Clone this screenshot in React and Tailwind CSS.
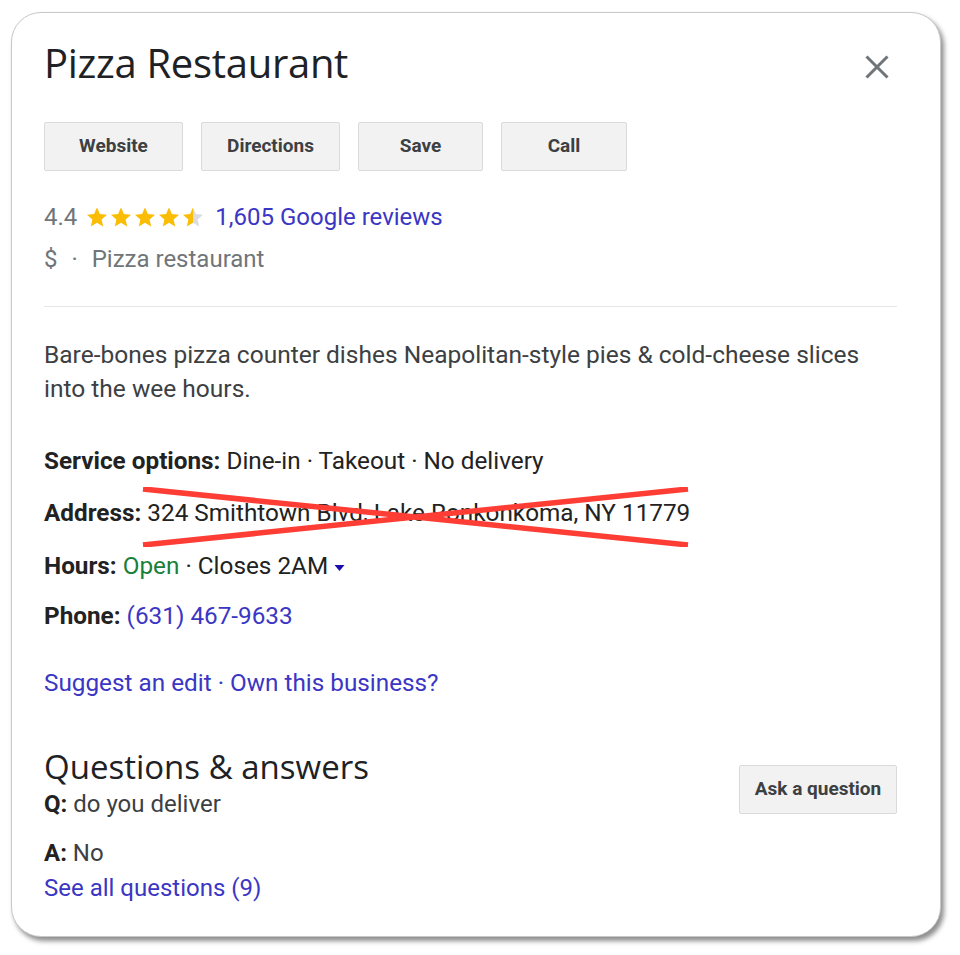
import React from "react";

const body = { fontFamily: "Roboto, 'Liberation Sans', sans-serif" };
const display = { fontFamily: "'Open Sans', Roboto, sans-serif" };

function Star({ fill = "full", id }) {
  const d = "M12 2.5l2.9 6.6 7.1.6-5.4 4.7 1.6 7-6.2-3.7-6.2 3.7 1.6-7L2 9.7l7.1-.6z";
  return (
    <svg viewBox="0 0 24 24" className="h-[24px] w-[24px]">
      {fill === "half" && (
        <defs>
          <linearGradient id={id}>
            <stop offset="50%" stopColor="#fbbc04" />
            <stop offset="50%" stopColor="#dadce0" />
          </linearGradient>
        </defs>
      )}
      <path d={d} fill={fill === "half" ? `url(#${id})` : "#fbbc04"} />
    </svg>
  );
}

function ActionButton({ label, width }) {
  return (
    <button
      className="h-[49px] rounded-[2px] border border-[#dadada] bg-[#f2f2f2] text-[19px] font-bold text-[#3c4043]"
      style={{ width }}
    >
      {label}
    </button>
  );
}

function InfoRow({ label, children, className = "" }) {
  return (
    <div className={`text-[24.3px] leading-[32px] text-[#222] ${className}`}>
      <span className="font-bold">{label}</span> {children}
    </div>
  );
}

export default function App() {
  return (
    <div className="min-h-[955px] w-[960px] bg-white pl-[11px] pt-[12px]" style={body}>
      <div className="relative h-[925px] w-[930px] rounded-[30px] border border-[#c8c8c8] bg-white pl-[32px] pr-[43px] pt-[25px] shadow-[3px_4px_5px_rgba(0,0,0,0.45)]">
        <div className="flex items-start justify-between">
          <h1 className="text-[40px] leading-[50px] tracking-[-0.3px] text-[#202124]" style={display}>
            Pizza Restaurant
          </h1>
          <svg viewBox="0 0 24 24" className="mr-[6px] mt-[15px] h-[28px] w-[28px]">
            <path d="M3 3L21 21M21 3L3 21" stroke="#70757a" strokeWidth="2.6" />
          </svg>
        </div>

        <div className="mt-[34px] flex gap-[18px]">
          <ActionButton label="Website" width={139} />
          <ActionButton label="Directions" width={139} />
          <ActionButton label="Save" width={125} />
          <ActionButton label="Call" width={126} />
        </div>

        <div className="mt-[30px] flex items-center text-[24px] leading-[32px]">
          <span className="text-[#70757a]">4.4</span>
          <span className="ml-[8px] flex items-center gap-0">
            <Star />
            <Star />
            <Star />
            <Star />
            <Star fill="half" id="halfstar" />
          </span>
          <span className="ml-[10px] text-[#3b36c4]">1,605 Google reviews</span>
        </div>
        <div className="mt-[10px] text-[24px] leading-[32px] text-[#70757a]">
          $ <span className="mx-[8px]">·</span> Pizza restaurant
        </div>

        <div className="mt-[31px] h-px bg-[#e6e6e6]" />

        <p className="mt-[31px] max-w-[830px] text-[24.5px] leading-[34px] text-[#3c4043]">
          Bare-bones pizza counter dishes Neapolitan-style pies &amp; cold-cheese slices into the wee hours.
        </p>

        <div className="relative">
          <InfoRow label="Service options:" className="mt-[39px]">
            Dine-in · Takeout · No delivery
          </InfoRow>
          <InfoRow label="Address:" className="mt-[20px]">
            324 Smithtown Blvd, Lake Ronkonkoma, NY 11779
          </InfoRow>
          <InfoRow label="Hours:" className="mt-[21px]">
            <span className="text-[#188038]">Open</span> · Closes 2AM{" "}
            <svg viewBox="0 0 10 6" className="inline h-[6px] w-[11px] align-middle">
              <path d="M0 0h10L5 6z" fill="#1a0dab" />
            </svg>
          </InfoRow>
          <InfoRow label="Phone:" className="mt-[18px]">
            <span className="text-[#3b36c4]">(631) 467-9633</span>
          </InfoRow>
          <svg className="pointer-events-none absolute left-[98px] top-[42px] h-[60px] w-[550px]" viewBox="0 0 550 60">
            <path d="M1 2L546 58M1 58L546 2" stroke="#fe3d35" strokeWidth="5.5" />
          </svg>
        </div>

        <div className="mt-[35px] text-[24.3px] leading-[32px] text-[#3b36c4]">
          Suggest an edit · Own this business?
        </div>

        <div className="mt-[48px] flex items-start justify-between">
          <div>
            <h2 className="text-[33px] leading-[40px] text-[#202124]" style={display}>
              Questions &amp; answers
            </h2>
            <div className="mt-[1px] text-[24px] leading-[32px] text-[#3c4043]">
              <span className="font-bold text-[#222]">Q:</span> do you deliver
            </div>
            <div className="mt-[17px] text-[24px] leading-[32px] text-[#3c4043]">
              <span className="font-bold text-[#222]">A:</span> No
            </div>
            <div className="mt-[3px] text-[24px] leading-[32px] text-[#3b36c4]">See all questions (9)</div>
          </div>
          <button className="mt-[18px] h-[49px] w-[158px] rounded-[2px] border border-[#dadada] bg-[#f2f2f2] text-[19px] font-bold text-[#3c4043]">
            Ask a question
          </button>
        </div>
      </div>
    </div>
  );
}
